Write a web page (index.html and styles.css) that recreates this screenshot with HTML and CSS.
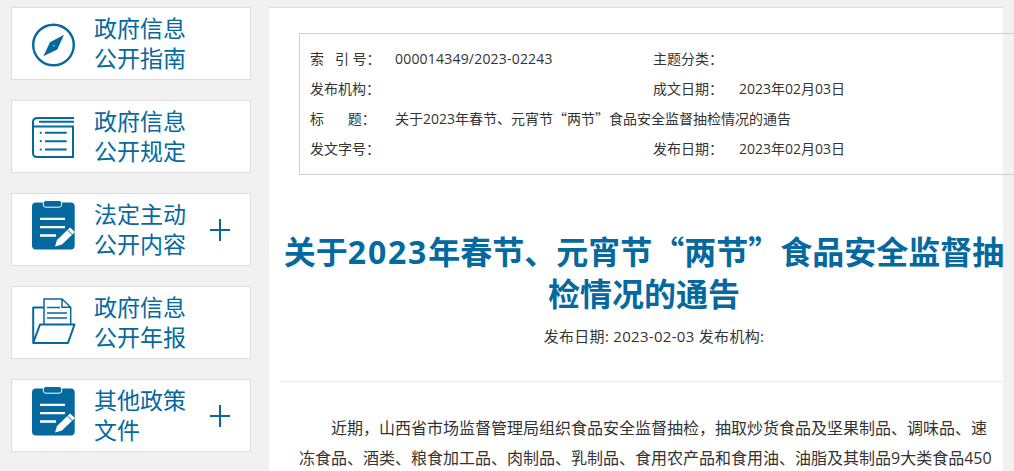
FILE: index.html
```html
<!DOCTYPE html>
<html lang="zh-CN">
<head>
    <meta charset="UTF-8">
    <title>关于2023年春节、元宵节“两节”食品安全监督抽检情况的通告</title>
    <link rel="stylesheet" href="styles.css">
</head>
<body>
    <div class="page">
        <div class="sidebar">
            <a class="side-item">
                <svg class="side-icon" viewBox="0 0 44 50">
                    <circle cx="21.5" cy="26" r="20.300" fill="none" stroke="#05699f" stroke-width="2.400"/>
                    <path d="M32 15.800 L25.300 30.500 L11.300 37.200 L18 23.200 Z" fill="#05699f"/>
                    <circle cx="21.700" cy="26.800" r="1" fill="#6fa6c6"/>
                </svg>
                <span class="side-text">政府信息<br>公开指南</span>
            </a>
            <a class="side-item">
                <svg class="side-icon" viewBox="0 0 44 50">
                    <path d="M42 6 H6 Q1 6 1 10 V41 Q1 45 5 45 H41 V14.500 H1" fill="none" stroke="#05699f" stroke-width="2"/>
                    <path d="M7 9.800 H42" stroke="#05699f" stroke-width="2"/>
                    <path d="M13 20.800 H34.700 M13 29.200 H34.700 M13 37.500 H34.700" stroke="#05699f" stroke-width="2"/>
                    <circle cx="8.700" cy="20.800" r="1.100" fill="#05699f"/>
                    <circle cx="8.700" cy="29.200" r="1.100" fill="#05699f"/>
                    <circle cx="8.700" cy="37.500" r="1.100" fill="#05699f"/>
                </svg>
                <span class="side-text">政府信息<br>公开规定</span>
            </a>
            <a class="side-item">
                <svg class="side-icon side-icon-up" viewBox="0 0 44 50">
                    <rect x="0" y="2.500" width="42.700" height="47" rx="4" fill="#05699f"/>
                    <rect x="11.300" y="0.500" width="18.400" height="6.700" rx="2.500" fill="#05699f" stroke="#fff"/>
                    <path d="M8 18.800 H33 M8 27.200 H33 M8 35.500 H24" stroke="#fff" stroke-width="2.300"/>
                    <path d="M23 46.500 L25 40 L38 27.500 L43 32 L30 44.500 Z" fill="#fff"/>
                    <path d="M35.500 30 L40.500 34.800" stroke="#05699f"/>
                </svg>
                <span class="side-text">法定主动<br>公开内容</span>
                <span class="side-plus"></span>
            </a>
            <a class="side-item">
                <svg class="side-icon" viewBox="0 0 44 50">
                    <path d="M12 9.500 H1.200 V45 L8 26.500 H42.500 L36 45 H1.200" fill="none" stroke="#05699f" stroke-width="2" stroke-linejoin="round"/>
                    <path d="M12 26.500 V1 H30 L38.700 9.200 V26.500 M30 1 V9.200 H38.700" fill="none" stroke="#05699f" stroke-width="1.500"/>
                    <path d="M15 9.500 H28 M15 15 H35 M15 20 H35" stroke="#05699f" stroke-width="1.300"/>
                </svg>
                <span class="side-text">政府信息<br>公开年报</span>
            </a>
            <a class="side-item">
                <svg class="side-icon side-icon-up" viewBox="0 0 44 50">
                    <rect x="0" y="2.500" width="42.700" height="47" rx="4" fill="#05699f"/>
                    <rect x="11.300" y="0.500" width="18.400" height="6.700" rx="2.500" fill="#05699f" stroke="#fff"/>
                    <path d="M8 18.800 H33 M8 27.200 H33 M8 35.500 H24" stroke="#fff" stroke-width="2.300"/>
                    <path d="M23 46.500 L25 40 L38 27.500 L43 32 L30 44.500 Z" fill="#fff"/>
                    <path d="M35.500 30 L40.500 34.800" stroke="#05699f"/>
                </svg>
                <span class="side-text">其他政策<br>文件</span>
                <span class="side-plus"></span>
            </a>
        </div>

        <div class="main">
            <div class="meta">
                <div class="meta-row">
                    <span class="meta-label">索&nbsp;&nbsp;&nbsp;引 号：</span>
                    <span class="meta-value">000014349/2023-02243</span>
                    <span class="meta-label">主题分类：</span>
                </div>
                <div class="meta-row">
                    <span class="meta-label">发布机构：</span>
                    <span class="meta-value"></span>
                    <span class="meta-label">成文日期：</span>
                    <span class="meta-date">2023年02月03日</span>
                </div>
                <div class="meta-row">
                    <span class="meta-label meta-title">标 题：</span>
                    <span>关于2023年春节、元宵节<span class="cjk">“两节”</span>食品安全监督抽检情况的通告</span>
                </div>
                <div class="meta-row">
                    <span class="meta-label">发文字号：</span>
                    <span class="meta-value"></span>
                    <span class="meta-label">发布日期：</span>
                    <span class="meta-date">2023年02月03日</span>
                </div>
            </div>

            <h1 class="title">关于<span class="title-num">2023</span>年春节、元宵节<span class="cjk">“两节”</span>食品安全监督抽检情况的通告</h1>
            <div class="info">发布日期: 2023-02-03 发布机构:</div>
            <div class="divider"></div>
            <div class="article">
                <p>近期，山西省市场监督管理局组织食品安全监督抽检，抽取炒货食品及坚果制品、调味品、速冻食品、酒类、粮食加工品、肉制品、乳制品、食用农产品和食用油、油脂及其制品9大类食品450</p>
            </div>
        </div>
    </div>
</body>
</html>
```

FILE: styles.css
```css
* {
    margin: 0;
    padding: 0;
    box-sizing: border-box;
}

html, body {
    height: 471px;
    overflow: hidden;
}

body {
    background-color: #f1f1f1;
    font-family: "Open Sans", "Noto Sans CJK SC", sans-serif;
}

.cjk {
    font-family: "Noto Sans CJK SC", sans-serif;
    line-height: 0;
}

.page {
    display: flex;
    align-items: flex-start;
    gap: 18px;
    padding: 7px 11px 0;
}

.sidebar {
    width: 240px;
    flex-shrink: 0;
    display: flex;
    flex-direction: column;
    gap: 20px;
}

.side-item {
    display: flex;
    align-items: center;
    height: 73px;
    padding-left: 20px;
    background-color: #fff;
    border: 1px solid #dedede;
}

.side-icon {
    width: 44px;
    height: 50px;
    flex-shrink: 0;
}

.side-icon-up {
    margin-top: -10px;
}

.side-text {
    margin-left: 18px;
    padding-bottom: 2px;
    width: 92px;
    font-size: 23px;
    line-height: 30px;
    color: #05699f;
}

.side-plus {
    width: 20px;
    height: 22px;
    margin-left: 24px;
    background:
        linear-gradient(#05699f, #05699f) center / 100% 2px no-repeat,
        linear-gradient(#05699f, #05699f) center / 2px 100% no-repeat;
}

.main {
    width: 734px;
    height: 470px;
    padding: 25px 0 0 11px;
    background-color: #fff;
    border-top: 1px solid #dedede;
}

.meta {
    width: 723px;
    height: 142px;
    margin-left: 19px;
    padding: 10px 0 0 10px;
    border: 1px solid #cfcfcf;
    border-right: none;
}

.meta-row {
    display: flex;
    height: 30px;
    line-height: 30px;
    font-size: 14px;
    color: #333;
    white-space: nowrap;
}

.meta-label {
    width: 85px;
    flex-shrink: 0;
}

.meta-title {
    word-spacing: 20px;
}

.meta-value {
    width: 258px;
    flex-shrink: 0;
    letter-spacing: 0.2px;
}

.meta-date {
    margin-left: 1px;
}

.title {
    margin: 56px -5px 0 0;
    font-size: 32px;
    line-height: 42px;
    font-weight: bold;
    text-align: center;
    color: #05699f;
}

.title-num {
    letter-spacing: 1.800px;
}

.info {
    margin-top: 10px;
    padding-left: 25px;
    font-size: 15px;
    line-height: 22px;
    letter-spacing: 0.300px;
    text-align: center;
    color: #333;
}

.divider {
    height: 3px;
    margin-top: 33px;
    background-color: #f5f5f5;
}

.article {
    padding: 30px 5px 0 19px;
    font-size: 16px;
    line-height: 30px;
    color: #333;
}

.article p {
    text-indent: 32px;
}
```
